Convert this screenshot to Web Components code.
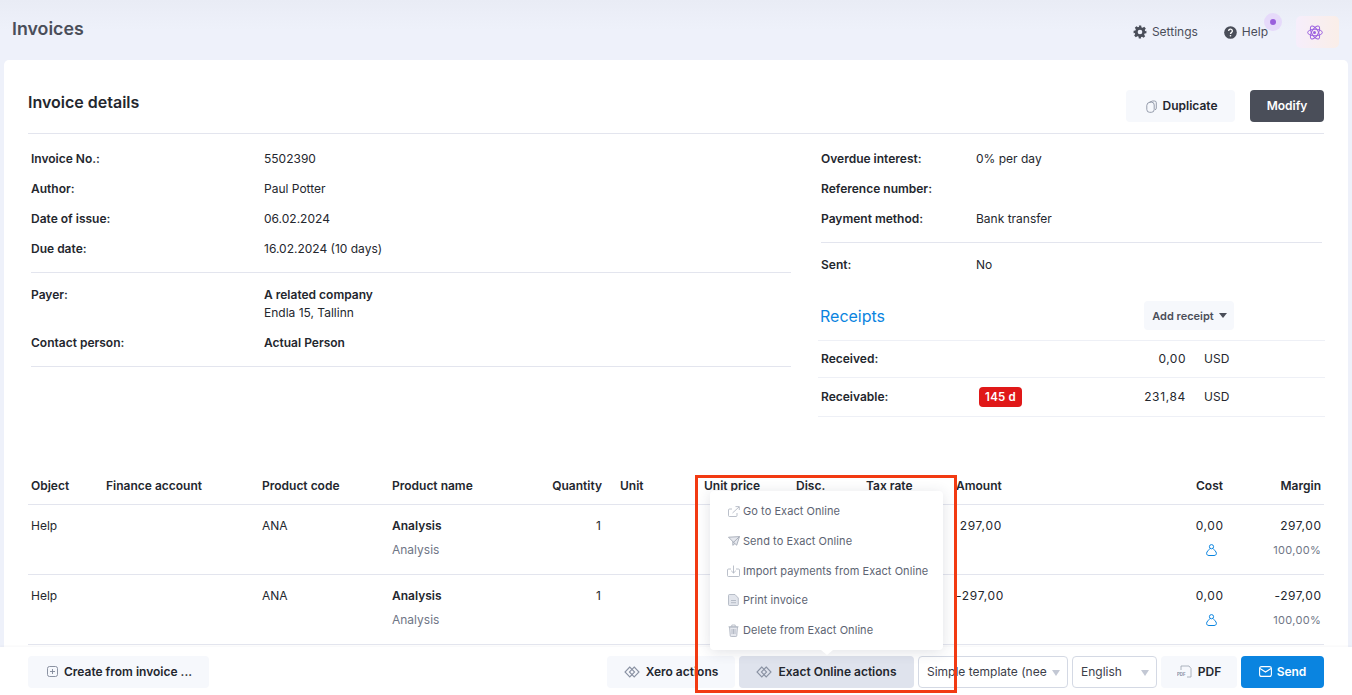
<!DOCTYPE html>
<html lang="en"><head><meta charset="utf-8"><title>Invoices</title>
<style>
html,body{margin:0;height:100%;overflow:hidden}
body{font:12px/18px Inter,"Liberation Sans",sans-serif;color:#24272e;background:#eef1fa}
inv-app{height:695px}
</style></head><body>
<inv-app>
  <inv-header slot="header"></inv-header>
  <inv-card>
    <inv-title-bar>
      <inv-btn icon="dup" style="width:109px;padding-left:2px">Duplicate</inv-btn>
      <inv-btn kind="dark" style="width:74px;margin-left:15px">Modify</inv-btn>
    </inv-title-bar>
    <inv-details>
      <inv-col slot="left">
        <inv-kv label="Invoice No.:">5502390</inv-kv>
        <inv-kv label="Author:">Paul Potter</inv-kv>
        <inv-kv label="Date of issue:">06.02.2024</inv-kv>
        <inv-kv label="Due date:">16.02.2024 (10 days)</inv-kv>
        <inv-rule></inv-rule>
        <inv-kv label="Payer:" tall><b>A related company</b><br>Endla 15, Tallinn</inv-kv>
        <inv-kv label="Contact person:"><b>Actual Person</b></inv-kv>
        <inv-rule></inv-rule>
      </inv-col>
      <inv-col slot="right">
        <inv-kv label="Overdue interest:" narrow>0% per day</inv-kv>
        <inv-kv label="Reference number:" narrow></inv-kv>
        <inv-kv label="Payment method:" narrow>Bank transfer</inv-kv>
        <inv-rule></inv-rule>
        <inv-kv label="Sent:" narrow>No</inv-kv>
        <inv-receipts></inv-receipts>
      </inv-col>
    </inv-details>
    <inv-table></inv-table>
  </inv-card>
  <inv-footer></inv-footer>
  <inv-menu></inv-menu>
  <inv-highlight></inv-highlight>
</inv-app>
<script>
const I={
 gear:'<svg width="14" height="14" viewBox="0 0 24 24"><path fill="#4a4e59" fill-rule="evenodd" d="M10 1h4l.6 3.100 2 .8 2.600-1.800 2.800 2.800-1.800 2.600.8 2L23 10v4l-3.100.6-.8 2 1.800 2.600-2.800 2.800-2.600-1.800-2 .8L14 23h-4l-.6-3.100-2-.8-2.600 1.800-2.800-2.800 1.800-2.600-.8-2L1 14v-4l3.100-.6.8-2-1.800-2.600 2.800-2.800 2.600 1.800 2-.8zM12 8a4 4 0 1 0 0 8 4 4 0 0 0 0-8z"/></svg>',
 help:'<svg width="13" height="13" viewBox="0 0 14 14"><circle cx="7" cy="7" r="6.800" fill="#4a4e59"/><path d="M5 5.400a2 2 0 1 1 3 1.700c-.7.4-1 .8-1 1.500" fill="none" stroke="#fff" stroke-width="1.400"/><circle cx="7" cy="10.500" r=".9" fill="#fff"/></svg>',
 atom:'<svg width="16" height="15" viewBox="0 0 18 17" fill="none" stroke="#9a5fe0" stroke-width="1.100"><g transform="translate(0 -.5)"><ellipse cx="9" cy="9" rx="8.300" ry="3.700"/><ellipse cx="9" cy="9" rx="8.300" ry="3.700" transform="rotate(60 9 9)"/><ellipse cx="9" cy="9" rx="8.300" ry="3.700" transform="rotate(120 9 9)"/></g></svg>',
 dup:'<svg width="11" height="13" viewBox="0 0 11 13" fill="none" stroke="#8a92a3" stroke-width=".9"><path d="M3.500 2.200 6.500 1h2A1.800 1.800 0 0 1 10.300 2.800V8a2 2 0 0 1-1.300 1.900M.8 5.300A3.500 3.500 0 0 1 4 2.200h1.500A2.700 2.700 0 0 1 8.200 5v4.500a2.800 2.800 0 0 1-2.800 2.800H3.600A2.800 2.800 0 0 1 .8 9.500z"/></svg>',
 plus:'<svg width="11" height="11" viewBox="0 0 11 11" fill="none" stroke="#7f8797" stroke-width=".9"><rect x=".5" y=".5" width="10" height="10" rx="2"/><path d="M5.500 3v5M3 5.500h5"/></svg>',
 dia:'<svg width="16" height="12" viewBox="0 0 16 12" fill="none" stroke="#8a92a3" stroke-width="1.100"><path d="M5.800 1 1 6l4.800 5L10.600 6z"/><path d="M10.200 1 15 6l-4.800 5L5.400 6z"/></svg>',
 pdf:'<svg width="15" height="13" viewBox="0 0 15 13" fill="none" stroke="#9aa1af" stroke-width=".8"><path d="M4 5V1h8l2 2.500V12H10"/><text x="0" y="11" font-family="Inter" font-size="4.400" font-weight="700" fill="#8a92a3" stroke="none">PDF</text></svg>',
 mail:'<svg width="13" height="11" viewBox="0 0 13 11" fill="none" stroke="#fff" stroke-width="1.100"><rect x=".6" y=".6" width="11.800" height="9.800" rx="2"/><path d="M1 2.500 6.500 6 12 2.500"/></svg>',
 person:'<svg width="11" height="12" viewBox="0 0 11 12" fill="none" stroke="#0a84e0" stroke-width="1"><circle cx="5.500" cy="2.700" r="2.100"/><path d="M3.900 4.500C3 6 .6 7.500.6 9.300c0 1.500 1 2.200 2.400 2.200h5c1.400 0 2.400-.7 2.400-2.200 0-1.800-2.400-3.300-3.300-4.800"/></svg>',
 ext:'<svg width="12" height="11" viewBox="0 0 12 11" fill="none" stroke="#aab0bc" stroke-width=".8"><path d="M9 7v2.500a1 1 0 0 1-1 1H1.500a1 1 0 0 1-1-1V4a1 1 0 0 1 1-1H4M4.500 7 11 1M7.500.6H11.300V4"/></svg>',
 send:'<svg width="12" height="10" viewBox="0 0 12 10" fill="#e6e8ee" stroke="#9aa1af" stroke-width=".8"><path d="M.5 1.200 11.500.6 8.700 9.200 5.500 6.300zM5.500 6.300 11.500.6M4.800 5.600v3.700l2-1.500"/></svg>',
 imp:'<svg width="13" height="12" viewBox="0 0 13 12" fill="none" stroke="#aab0bc" stroke-width=".8"><path d="M4 4H1.500a1 1 0 0 0-1 1v5.500a1 1 0 0 0 1 1h10a1 1 0 0 0 1-1V5a1 1 0 0 0-1-1H9M6.500.5V8M4.200 5.800 6.500 8l2.300-2.200"/></svg>',
 doc:'<svg width="11" height="12" viewBox="0 0 11 12" fill="#e2e5ec" stroke="#aab0bc" stroke-width=".8"><path d="M1.500.5H7L10.300 4v6.500a1 1 0 0 1-1 1H1.500a1 1 0 0 1-1-1v-9a1 1 0 0 1 1-1z"/><path d="M3 6.500h5M3 8.700h5" fill="none"/></svg>',
 trash:'<svg width="11" height="13" viewBox="0 0 11 13" fill="#e6e8ee" stroke="#aab0bc" stroke-width=".8"><path d="M1.500 3l.7 8.500a1 1 0 0 0 1 1h4.600a1 1 0 0 0 1-1L9.500 3z"/><path d="M.5 2.800h10M3.800 2.500V1h3.400v1.500M4 5v5M5.500 5v5M7 5v5" fill="none"/></svg>'
};
function def(name,css,html,init){
 customElements.define(name,class extends HTMLElement{
  connectedCallback(){
   if(this.shadowRoot)return;
   const r=this.attachShadow({mode:'open'});
   r.innerHTML='<style>'+css+'</style>'+(typeof html==='function'?html(this):html);
   if(init)init(this,r);
  }
 });
}
def('inv-app',':host{display:flex;flex-direction:column;position:relative;overflow:hidden;width:1352px;background:linear-gradient(#e9ecf5,#eef1fa 30px)}','<slot name="header"></slot><slot></slot>');
def('inv-header',`:host{display:flex;align-items:center;height:60px;flex:none;padding:0 13px 0 12px;box-sizing:border-box;position:relative}
h1{font:600 17.800px/24px Inter,sans-serif;color:#4a4e59;margin:-3px auto 0 0}
a{display:flex;align-items:center;gap:5px;color:#4a4e59;font-size:12px;margin-top:4px}
svg{display:block}
.pulse{position:absolute;left:1264px;top:13px;width:18px;height:18px;border-radius:50%;background:#e6dafa;display:flex;align-items:center;justify-content:center}
.pulse i{width:6px;height:6px;border-radius:50%;background:#9a5fdc}
.pulse+.atom::after{content:"";position:absolute;left:1313px;top:31px;width:3px;height:3px;border-radius:50%;background:#9a5fe0}
.atom{width:43px;height:32px;margin:4px 0 0 28px;border-radius:5px;background:linear-gradient(90deg,#f6eefb,#faeee8);display:flex;align-items:center;justify-content:center;box-sizing:border-box;padding-right:6px}`,
`<h1>Invoices</h1><a style="margin-right:26px">${I.gear}Settings</a><a>${I.help}Help</a><div class="pulse"><i></i></div><div class="atom">${I.atom}</div>`);
def('inv-card',':host{display:block;flex:none;height:587px;margin:0 4px;padding:0 24px;box-sizing:border-box;background:#fff;border-radius:5px 5px 0 0;overflow:hidden}','<slot></slot>');
def('inv-title-bar',`:host{display:flex;align-items:flex-end;height:74px;border-bottom:1px solid #e3e5ee;padding-bottom:11px;box-sizing:border-box}
h2{font:600 16px/20px Inter,sans-serif;margin:0 auto 10px 0;color:#24272e}`,'<h2>Invoice details</h2><slot></slot>');
def('inv-btn',`:host{display:inline-flex;align-items:center;justify-content:center;gap:6px;height:32px;flex:none;box-sizing:border-box;border-radius:4px;background:#f6f8fc;color:#24272e;font:600 12px/18px Inter,sans-serif}
:host([kind=dark]){background:#4a4e59;color:#fff}
:host([kind=blue]){background:#0a84e0;color:#fff;gap:5px}
:host([kind=active]){background:#dfe3ed}
svg{display:block}`,h=>(h.getAttribute('icon')?I[h.getAttribute('icon')]:'')+'<slot></slot>');
def('inv-details',':host{display:grid;grid-template-columns:766px 507px;column-gap:24px;padding-top:10px;height:273px;box-sizing:content-box}','<slot name="left"></slot><slot name="right"></slot>');
def('inv-col',':host{display:block;min-width:0}','<slot></slot>');
def('inv-kv',`:host{display:grid;grid-template-columns:233px 1fr;padding:6px 3px;line-height:18px}
:host([narrow]){grid-template-columns:155px 1fr}
.l{font-weight:600;color:#24272e}
::slotted(b){font-weight:600}`,h=>`<div class="l">${h.getAttribute('label')}</div><div><slot></slot></div>`);
def('inv-rule',':host{display:block;height:1px;background:#e3e5ee;margin:8px 3px 7px}','');
def('inv-receipts',`:host{display:block;margin-top:21px}
.h{display:flex;align-items:center;padding:0 3px 10px;border-bottom:1px solid #eef0f6;height:29px}
h3{font:400 16px/20px Inter,sans-serif;color:#0a84e0;margin:0 0 0 -1px;width:324px}
.add{height:29px;width:90px;border-radius:4px;background:#f6f8fc;display:flex;align-items:center;justify-content:center;gap:5px;font:600 11px/16px Inter,sans-serif;color:#4a4e59;padding-left:1px;box-sizing:border-box}
.add i{border:4px solid transparent;border-top:5px solid #4a4e59;border-bottom:0}
.r{display:grid;grid-template-columns:158px 207px 18px auto;align-items:center;padding:0 3px;height:36px;border-bottom:1px solid #eef0f6}
.r+.r{height:38px}
.r>span:first-child{font-weight:600}
.n{text-align:right;letter-spacing:.5px}
.b{display:inline-block;background:#e01818;color:#fff;font-weight:600;border-radius:4px;height:20px;line-height:20px;width:43px;text-align:center;font-size:11.500px;letter-spacing:.2px}
.c{display:flex;justify-content:space-between;align-items:center}
.c>span:last-child{letter-spacing:.65px}`,
`<div class="h"><h3>Receipts</h3><div class="add">Add receipt<i></i></div></div>
<div class="r"><span>Received:</span><span class="n">0,00</span><span></span><span>USD</span></div>
<div class="r"><span>Receivable:</span><span class="c"><span class="b">145 d</span><span>231,84</span></span><span></span><span>USD</span></div>`);
const cols='75px 156px 130px 146px 70px 96px 92px 70px 90px 177px 96px 98px';
def('inv-table',`:host{display:block;margin-top:49px}
.row{display:grid;grid-template-columns:${cols};border-bottom:1px solid #e3e5ee;height:69px;box-sizing:content-box}
.row.h{height:38px;font-weight:600;align-items:center}
.row.h>div{padding-top:2px;box-sizing:border-box}
.row>div{padding:0 3px;min-width:0}
.row:not(.h)>div{padding-top:12px}
.right{text-align:right}
.q{padding-right:4px!important}
.num{letter-spacing:.55px;margin-right:-.55px}
.amt{width:46px;text-align:right;letter-spacing:.7px}
.sub{margin-top:6px;color:#6f7686}
.pct{font-size:11px;letter-spacing:.3px}
b{font-weight:600}
.ic{margin-top:6px;height:18px;display:flex;justify-content:flex-end;align-items:center;padding-right:6px}
svg{display:block}`,()=>{
 const row=(o,amt,m)=>`<div class="row"><div>${o}</div><div></div><div>ANA</div><div><b>Analysis</b><div class="sub">Analysis</div></div><div class="right q">1</div><div></div><div></div><div></div><div></div><div><div class="amt">${amt}</div></div><div class="right"><span class="num">0,00</span><div class="ic">${I.person}</div></div><div class="right"><span class="num">${m}</span><div class="sub pct">100,00%</div></div></div>`;
 return `<div class="row h"><div>Object</div><div>Finance account</div><div>Product code</div><div>Product name</div><div class="right">Quantity</div><div style="padding-left:15px">Unit</div><div>Unit price</div><div>Disc.</div><div>Tax rate</div><div>Amount</div><div class="right">Cost</div><div class="right">Margin</div></div>`+row('Help','297,00','297,00')+row('Help','-297,00','-297,00');
});
def('inv-footer',`:host{display:flex;align-items:center;flex:none;height:48px;padding:1px 28px 0;box-sizing:border-box;background:#fff;box-shadow:0 -1px 2px rgba(40,50,80,.04);position:relative}
.sp{flex:1}
.sel{display:flex;align-items:center;height:32px;box-sizing:border-box;border:1px solid #d4d9e4;border-radius:4px;padding:0 8px;background:#fff;color:#3c4049;font-size:12px;white-space:nowrap;overflow:hidden;position:relative}
.sel i{position:absolute;right:7px;top:13px;border:4px solid transparent;border-top:6px solid #c3c8d4;border-bottom:0}`,
`<inv-btn icon="plus" style="width:181px;padding-left:2px">Create from invoice ...</inv-btn><div class="sp"></div>
<inv-btn icon="dia" style="width:128px">Xero actions</inv-btn>
<inv-btn icon="dia" kind="active" style="width:175px;margin-left:4px">Exact Online actions</inv-btn>
<div class="sel" style="width:150px;margin-left:4px">Simple template (nee<i></i></div>
<div class="sel" style="width:85px;margin-left:4px">English<i></i></div>
<inv-btn icon="pdf" style="width:76px;margin-left:4px">PDF</inv-btn>
<inv-btn icon="mail" kind="blue" style="width:83px;margin-left:4px">Send</inv-btn>`);
def('inv-menu',`:host{position:absolute;left:710px;top:491px;width:233px;height:159px;box-sizing:border-box;background:#fff;border-radius:4px;box-shadow:0 2px 14px rgba(40,50,80,.14);padding:5.500px 0 0 17px;font-size:11px;letter-spacing:.06px;color:#5d6472}
.i{display:flex;align-items:center;height:29.700px;white-space:nowrap}
.i span{display:flex;justify-content:center;width:13px;margin-right:3px}
.a{position:absolute;left:111px;top:159px;border:6px solid transparent;border-top:5px solid #fff;border-bottom:0}
svg{display:block}`,
[['ext','Go to Exact Online'],['send','Send to Exact Online'],['imp','Import payments from Exact Online'],['doc','Print invoice'],['trash','Delete from Exact Online']].map(x=>`<div class="i"><span>${I[x[0]]}</span>${x[1]}</div>`).join('')+'<div class="a"></div>');
def('inv-highlight',':host{position:absolute;left:695px;top:475px;width:262px;height:218px;box-sizing:border-box;border:3px solid #f23a12;pointer-events:none}','');
</script>
</body></html>
